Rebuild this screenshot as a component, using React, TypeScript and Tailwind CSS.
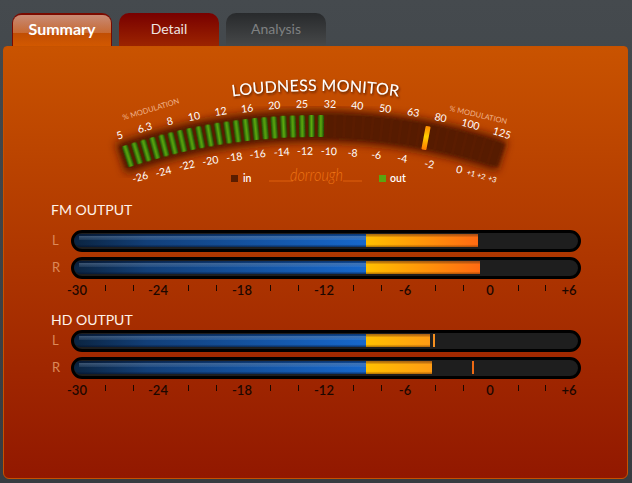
import React from 'react';

// meter arc geometry, in page pixels
const CX = 315.5;
const CY = 727;
const R = 601;

const polar = (deg: number, r: number = R) => {
  const a = (deg * Math.PI) / 180;
  return { x: CX + r * Math.sin(a), y: CY - r * Math.cos(a) };
};

const arcPath = (from: number, to: number, r: number = R) => {
  const a = polar(from, r);
  const b = polar(to, r);
  return `M${a.x} ${a.y} A${r} ${r} 0 0 1 ${b.x} ${b.y}`;
};

const rotFor = (x: number) => ((x - CX) / R) * 57.3;

const TOP_LABELS: [string, number, number][] = [
  ['5', 119.7, 135], ['6.3', 144.7, 127.3], ['8', 169.7, 121], ['10', 194, 116], ['12', 220.7, 111],
  ['16', 247, 108], ['20', 274.3, 105], ['25', 302, 103.7], ['32', 330, 103.7], ['40', 357.3, 105.3],
  ['50', 385.3, 108.3], ['63', 413.3, 112], ['80', 440.7, 117.3], ['100', 470.7, 124], ['125', 502, 132.7],
];

const BOTTOM_LABELS: [string, number, number][] = [
  ['-26', 140, 176.7], ['-24', 163.3, 171.3], ['-22', 186.7, 165], ['-20', 210.3, 160.3], ['-18', 234.3, 156.7],
  ['-16', 257.7, 153.7], ['-14', 281.7, 151.7], ['-12', 305, 150.7], ['-10', 329, 151], ['-8', 352.7, 152.7],
  ['-6', 376.3, 154.7], ['-4', 402.3, 158.3], ['-2', 429.3, 163.7], ['0', 459.3, 169.3],
];

const SMALL_LABELS: [string, number, number][] = [
  ['+1', 471, 173.3], ['+2', 481.3, 176], ['+3', 492.3, 179],
];

const SEGMENTS = Array.from({ length: 41 }, (_, i) => -18.18 + i * 0.89);
const LIT = 22;

const Label: React.FC<{ t: string; x: number; y: number; size?: number; fill?: string }> = ({ t, x, y, size = 10.5, fill = '#ffffff' }) => (
  <text
    x={x}
    y={y}
    fontSize={size}
    fill={fill}
    textAnchor="middle"
    dominantBaseline="central"
    transform={`rotate(${rotFor(x)} ${x} ${y})`}
  >
    {t}
  </text>
);

const Meter = () => (
  <svg viewBox="4 47 624 150" className="block h-[150px] w-[624px]">
    <defs>
      <filter id="halo" x="-10%" y="-60%" width="120%" height="220%">
        <feGaussianBlur stdDeviation="4.5" />
      </filter>
      <filter id="soft" x="-5%" y="-30%" width="110%" height="160%">
        <feGaussianBlur stdDeviation="1.2" />
      </filter>
      <filter id="segSoft" x="-30%" y="-10%" width="160%" height="120%">
        <feGaussianBlur stdDeviation="0.5" />
      </filter>
      <filter id="titleShadow" x="-5%" y="-30%" width="110%" height="170%">
        <feDropShadow dx="1" dy="1.5" stdDeviation="0.8" floodColor="#4a1500" floodOpacity="0.9" />
      </filter>
      <linearGradient id="greenSeg" x1="0" y1="0" x2="1" y2="0">
        <stop offset="0" stopColor="#1d4a05" />
        <stop offset="0.5" stopColor="#5cab0c" />
        <stop offset="1" stopColor="#1d4a05" />
      </linearGradient>
      <linearGradient id="peakSeg" x1="0" y1="0" x2="0" y2="1">
        <stop offset="0" stopColor="#ff8a00" />
        <stop offset="0.45" stopColor="#ffd000" />
        <stop offset="1" stopColor="#ff7a00" />
      </linearGradient>
    </defs>

    <path d={arcPath(-18.9, 18.1)} stroke="#4f1800" strokeWidth={32} fill="none" filter="url(#halo)" />
    <path d={arcPath(-18.7, 18.0)} stroke="#5a1d00" strokeWidth={24} fill="none" filter="url(#soft)" />

    {SEGMENTS.map((deg, i) => {
      const p = polar(deg);
      const lit = i < LIT;
      return (
        <rect
          key={i}
          x={p.x - 3.2}
          y={p.y - 11}
          width={6.4}
          height={22}
          rx={1.5}
          fill={lit ? 'url(#greenSeg)' : '#561b00'}
          filter={lit ? 'url(#segSoft)' : undefined}
          transform={`rotate(${deg} ${p.x} ${p.y})`}
        />
      );
    })}

    <rect x={423.5} y={126} width={5} height={24} rx={1} fill="url(#peakSeg)" transform="rotate(10.6 426 138)" />

    <path id="titleArc" d={arcPath(-9, 9, 636)} fill="none" />
    <text fontSize={16} fill="#ffffff" filter="url(#titleShadow)" letterSpacing={0.2}>
      <textPath href="#titleArc" startOffset="50%" textAnchor="middle">
        LOUDNESS MONITOR
      </textPath>
    </text>

    <text x={151} y={109.3} fontSize={7.5} fill="#f0b48c" textAnchor="middle" dominantBaseline="central" transform="rotate(-17 151 109.3)">
      % MODULATION
    </text>
    <text x={478.3} y={115} fontSize={7.5} fill="#f0b48c" textAnchor="middle" dominantBaseline="central" transform="rotate(13 478.3 115)">
      % MODULATION
    </text>

    {TOP_LABELS.map(([t, x, y]) => <Label key={t} t={t} x={x} y={y} />)}
    {BOTTOM_LABELS.map(([t, x, y]) => <Label key={t} t={t} x={x} y={y} />)}
    {SMALL_LABELS.map(([t, x, y]) => <Label key={t} t={t} x={x} y={y} size={7.5} />)}

    <rect x={231} y={175} width={7} height={7} fill="#5a1d00" />
    <text x={243} y={177.7} fontSize={10.5} fontWeight={600} fill="#ffffff" dominantBaseline="central">in</text>

    <path d="M269 181 H293 M343 181 H362" stroke="#e8680f" strokeWidth={0.8} />
    <text x={290} y={181} fontSize={18} fontWeight={300} fontStyle="italic" fill="#ee7414" textLength={53} lengthAdjust="spacingAndGlyphs">dorrough</text>

    <rect x={379} y={175} width={7} height={7} fill="#5aa510" />
    <text x={390} y={177.7} fontSize={10.5} fontWeight={600} fill="#ffffff" dominantBaseline="central">out</text>
  </svg>
);

const SCALE = [
  { t: '-30', m: 'ml-0' }, { m: 'ml-[28px]' }, { m: 'ml-[28px]' },
  { t: '-24', m: 'ml-[25px]' }, { m: 'ml-[30px]' }, { m: 'ml-[28px]' },
  { t: '-18', m: 'ml-[26px]' }, { m: 'ml-[28px]' }, { m: 'ml-[28px]' },
  { t: '-12', m: 'ml-[26px]' }, { m: 'ml-[29px]' }, { m: 'ml-[28px]' },
  { t: '-6', m: 'ml-[24px]' }, { m: 'ml-[30px]' }, { m: 'ml-[28px]' },
  { t: '0', m: 'ml-[27px]' }, { m: 'ml-[28px]' }, { m: 'ml-[27px]' },
  { t: '+6', m: 'ml-[24px]' },
];

const Scale = () => (
  <div className="ml-[73px] flex h-4 items-start">
    {SCALE.map((s, i) => (
      <div key={i} className={`flex w-0 justify-center ${s.m}`}>
        {s.t ? (
          <span className="text-[13px] leading-4 font-semibold whitespace-nowrap text-[#1c0700]">{s.t}</span>
        ) : (
          <span className="mt-[3px] block h-[6px] w-px shrink-0 bg-[#1c0700]" />
        )}
      </div>
    ))}
  </div>
);

interface BarProps {
  ch: string;
  amber: string;
  peak?: string;
}

const Bar: React.FC<BarProps> = ({ ch, amber, peak }) => (
  <div className="flex h-[22px] items-center pl-[47px]">
    <span className="w-[20px] pl-px text-[13px] text-[#dc8a58]">{ch}</span>
    <div className="h-[22px] w-[510px] overflow-hidden rounded-full border-[3px] border-black bg-[#1e1e1e]">
      <div className="mt-px flex h-[13px]">
        <div className="relative w-[292px] rounded-l-[7px] bg-[linear-gradient(to_right,#0b2440_0%,#123f78_25%,#1768cc_100%)]">
          <div className="absolute inset-0 rounded-l-[7px] bg-[linear-gradient(to_bottom,rgba(3,15,40,0.55)_0%,rgba(3,15,40,0.3)_15%,transparent_45%,transparent_80%,rgba(3,15,40,0.6)_100%)]" />
          <div className="absolute top-[2px] right-0 left-[5px] h-[4px] bg-[linear-gradient(to_bottom,rgba(170,200,230,0.32),rgba(170,200,230,0.1))]" />
        </div>
        <div className={`relative ${amber}`}>
          <div className="absolute inset-0 bg-[linear-gradient(to_bottom,rgba(120,60,20,0.65)_0%,rgba(120,60,20,0.4)_15%,transparent_25%,transparent_80%,rgba(110,50,0,0.55)_100%)]" />
        </div>
        {peak === 'l' && <div className="ml-[3px] w-[2px] bg-[#f59020]" />}
        {peak === 'r' && <div className="ml-[40px] w-[2px] bg-[#ee6a14]" />}
      </div>
    </div>
  </div>
);

const Tab: React.FC<{ label: string; cls: string; active?: boolean }> = ({ label, cls, active }) => (
  <div className={`relative flex h-[33px] w-[100px] items-start justify-center rounded-t-[10px] leading-[18px] ${cls}`}>
    {active && <div className="absolute top-0 right-0 left-0 h-[18px] rounded-t-[8px] bg-[linear-gradient(to_bottom,rgba(225,190,190,0.6),rgba(225,190,190,0.25))]" />}
    <span className="relative">{label}</span>
  </div>
);

export default function App() {
  return (
    <div className="flex h-[483px] w-[632px] flex-col overflow-hidden bg-[linear-gradient(to_bottom,#454a4e,#373c41)] font-['Lato',sans-serif]">
      <div className="flex h-[46px] items-end gap-[7px] pl-3">
        <Tab label="Summary" active cls="border-x border-t-2 border-[#7a0a00] bg-[linear-gradient(to_bottom,#a84008,#d25800)] pt-[5px] text-[16px] font-bold text-white" />
        <Tab label="Detail" cls="bg-[linear-gradient(to_bottom,#780000,#9c2400)] pt-[7px] text-[14px] text-[#efe4e0]" />
        <Tab label="Analysis" cls="bg-[linear-gradient(to_bottom,#282a2c,#464849)] pt-[7px] text-[14px] text-[#7f8182]" />
      </div>

      <div className="ml-[3px] h-[433px] w-[625px] rounded-md rounded-t-[4px] border border-[#c65200] bg-[linear-gradient(to_bottom,#c95300,#921800)]">
        <Meter />

        <h2 className="mt-[5px] mb-3 h-4 pl-[47px] text-[14px] leading-4 font-normal text-[#fff3ea]">FM OUTPUT</h2>
        <div className="flex flex-col gap-[5px]">
          <Bar ch="L" amber="w-[112px] bg-[linear-gradient(to_right,#ffc000,#ff6a12)]" />
          <Bar ch="R" amber="w-[114px] bg-[linear-gradient(to_right,#ffc000,#ff6a12)]" />
        </div>
        <div className="mt-[3px]"><Scale /></div>

        <h2 className="mt-[14px] mb-[2px] h-4 pl-[47px] text-[14px] leading-4 font-normal text-[#fff3ea]">HD OUTPUT</h2>
        <div className="flex flex-col gap-[5px]">
          <Bar ch="L" amber="w-[64px] bg-[linear-gradient(to_right,#ffc000,#ff9c14)]" peak="l" />
          <Bar ch="R" amber="w-[66px] bg-[linear-gradient(to_right,#ffc000,#ff9c14)]" peak="r" />
        </div>
        <div className="mt-[3px]"><Scale /></div>
      </div>
    </div>
  );
}
